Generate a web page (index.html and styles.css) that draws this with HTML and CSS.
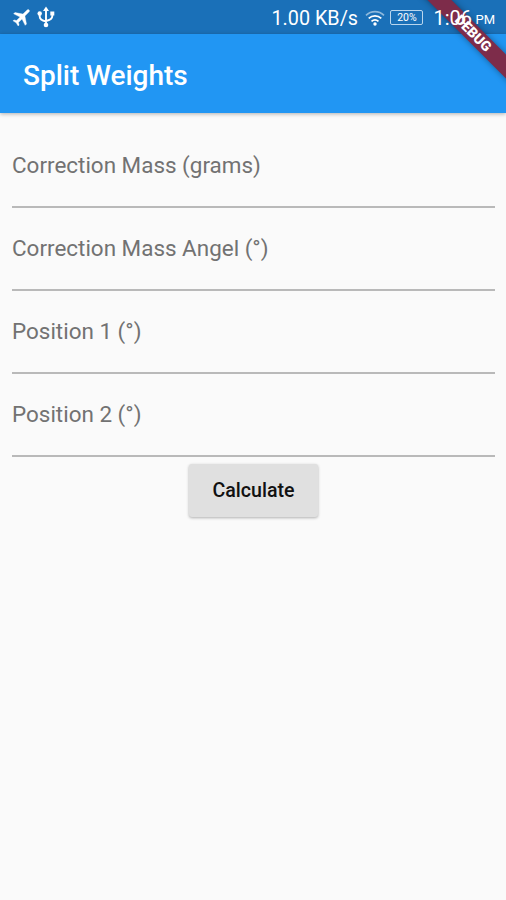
FILE: index.html
```html
<!DOCTYPE html>
<html lang="en">
<head>
    <meta charset="UTF-8">
    <meta name="viewport" content="width=device-width, initial-scale=1.0">
    <title>Split Weights</title>
    <link rel="stylesheet" href="styles.css">
</head>
<body>
    <!-- Status bar -->
    <header class="status-bar">
        <div class="status-left">
            <svg class="icon-plane" width="20" height="20" viewBox="1 1 22 22">
                <path transform="rotate(45 12 12)" fill="#fff" stroke="#fff" stroke-width="0.4" d="M21 16v-2l-7.500-5V2.500a1.500 1.500 0 0 0-3 0V9L3 14v2l7.500-2.500V19L8 20.500V22l4-1 4 1v-1.500L13.500 19v-5.500z"/>
            </svg>
            <svg class="icon-usb" width="18" height="22" viewBox="0 0 18 22" fill="none" stroke="#fff" stroke-width="1.9">
                <path d="M9 3v15M2.7 8v2.500c0 3 2 4 6.300 5M15.3 8v2c0 3-2 4-6.300 5"/>
                <path d="M9 0.500l3 4.500H6z" fill="#fff" stroke="none"/>
                <circle cx="2.7" cy="7.500" r="2.200" fill="#fff" stroke="none"/>
                <path d="M13.300 5.500h4v4h-4z" fill="#fff" stroke="none"/>
                <circle cx="9" cy="19" r="2.300" fill="#fff" stroke="none"/>
            </svg>
        </div>
        <div class="status-right">
            <span class="speed">1.00 KB/s</span>
            <svg class="icon-wifi" width="20" height="16" viewBox="0 0 20 16" fill="none" stroke="#fff" stroke-width="1.7">
                <path d="M1 5.300c5.200-4.900 12.800-4.900 18 0" opacity=".5"/>
                <path d="M3.700 8.400c3.700-3.400 8.900-3.400 12.600 0M6.500 11.400c2.100-1.900 4.900-1.900 7 0"/>
                <circle cx="10" cy="14" r="1.7" fill="#fff" stroke="none"/>
            </svg>
            <span class="battery">20%</span>
            <span class="time">1:06</span>
            <span class="meridiem">PM</span>
        </div>
    </header>

    <!-- App bar -->
    <div class="app-bar">
        <h1>Split Weights</h1>
    </div>

    <!-- Debug banner -->
    <div class="banner-clip">
        <div class="debug-banner">DEBUG</div>
    </div>

    <!-- Form -->
    <form class="form">
        <div class="field">
            <label for="mass">Correction Mass (grams)</label>
            <input id="mass" type="text">
        </div>
        <div class="field">
            <label for="angle">Correction Mass Angel (°)</label>
            <input id="angle" type="text">
        </div>
        <div class="field">
            <label for="pos1">Position 1 (°)</label>
            <input id="pos1" type="text">
        </div>
        <div class="field">
            <label for="pos2">Position 2 (°)</label>
            <input id="pos2" type="text">
        </div>
        <button class="calculate" type="button">Calculate</button>
    </form>
</body>
</html>
```
FILE: styles.css
```css
* {
    box-sizing: border-box;
}

body {
    margin: 0;
    min-height: 100vh;
    background-color: #fafafa;
    font-family: Roboto, "Liberation Sans", sans-serif;
    position: relative;
    overflow: hidden;
}

/* Status bar */
.status-bar {
    display: flex;
    justify-content: space-between;
    height: 34px;
    padding: 0 11px 0 12px;
    background-color: #1a70b8;
    color: #fff;
}

.status-left,
.status-right {
    display: flex;
    align-items: center;
    position: relative;
    z-index: 2; /* system icons stay above the banner */
}

.icon-usb {
    margin-left: 5px;
}

.status-right {
    white-space: nowrap;
    line-height: 34px;
    padding-top: 2px;
}

.speed {
    width: 94px;
    padding-top: 1px;
    font-size: 19.8px;
}

.icon-wifi {
    margin-bottom: 1px;
}

.battery {
    width: 33px;
    height: 15px;
    margin: 0 10px 1px 5px;
    border: 1px solid #b9d6ee;
    border-radius: 2px;
    font-size: 10.5px;
    line-height: 13px;
    text-align: center;
}

.time {
    width: 38px;
    font-size: 20px;
}

.meridiem {
    margin-left: 4px;
    padding-top: 4px;
    font-size: 13px;
}

/* App bar */
.app-bar {
    display: flex;
    align-items: center;
    height: 79px;
    padding: 4px 23px 0;
    background-color: #2196f3;
    box-shadow: 0 1px 4px rgba(0, 0, 0, 0.3);
}

.app-bar h1 {
    margin: 0;
    color: #fff;
    font-size: 28px;
    font-weight: 500;
}

/* Debug banner */
.banner-clip {
    position: absolute;
    top: 0;
    right: 0;
    width: 100px;
    height: 100px;
    overflow: hidden;
    z-index: 1;
}

.debug-banner {
    position: absolute;
    top: 25px;
    left: -33px;
    width: 200px;
    height: 17px;
    background-color: #7d2c4a;
    box-shadow: 0 0 6px rgba(0, 0, 0, 0.4);
    color: #fff;
    font-size: 14px;
    font-weight: 900;
    line-height: 17px;
    text-align: center;
    transform: rotate(45deg);
}

/* Form */
.form {
    display: flex;
    flex-direction: column;
    align-items: center;
    padding: 12px 11px 0 12px;
}

.field {
    display: flex;
    flex-direction: column;
    width: 100%;
    height: 83px;
    padding-top: 25px;
    border-bottom: 2px solid #b9b9b9;
}

.field label {
    color: #727272;
    font-size: 22.45px;
    line-height: 30px;
}

.field input {
    width: 100%;
    height: 20px;
    padding: 0;
    border: 0;
    outline: 0;
    background: transparent;
}

.calculate {
    width: 129px;
    height: 53px;
    margin-top: 7px;
    padding: 0;
    border: 0;
    border-radius: 3px;
    background-color: #e0e0e0;
    box-shadow: 0 1px 3px rgba(0, 0, 0, 0.3);
    color: #111;
    font-family: inherit;
    font-size: 19.6px;
    font-weight: 500;
}
```
